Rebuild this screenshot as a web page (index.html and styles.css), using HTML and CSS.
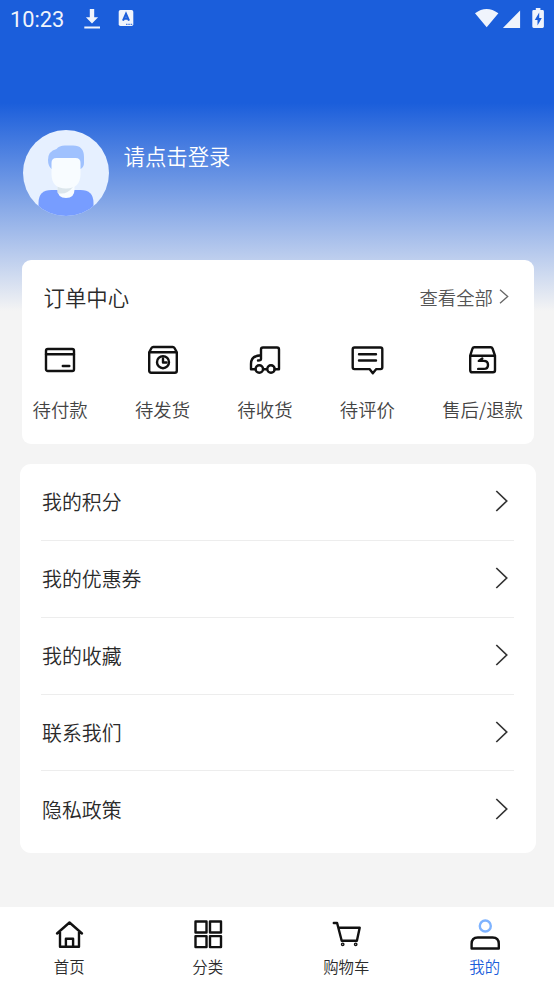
FILE: index.html
```html
<!DOCTYPE html>
<html lang="zh-CN">
<head>
<meta charset="utf-8">
<title>我的</title>
<link rel="stylesheet" href="styles.css">
</head>
<body>
<div class="screen">
  <div class="status">
    <span class="clock">10:23</span>
    <svg class="download" width="18" height="22" viewBox="0 0 18 22" fill="#f0f4fc"><path d="M6.800 1h4.400v8.300h3.900L9 15.500 2.900 9.300h3.900zM1.300 18.400h15.700v2H1.300z"/></svg>
    <svg class="app" width="16" height="18" viewBox="0 0 16 18"><rect x=".7" y="1" width="14.600" height="16" rx="1.800" fill="#f0f4fc"/><path d="M5 11.700 8 4.900 11 11.700M6 9.600h4" fill="none" stroke="#1b5edb" stroke-width="2.100"/><path d="M8 15.300h7" stroke="#1b5edb" stroke-width="1" stroke-dasharray="1.500 .8"/></svg>
    <svg class="signals" width="70" height="22" viewBox="0 0 70 22" fill="#f0f4fc"><path d="M0 5.300Q11.500-3.300 23.400 5.300L11.700 19.300zM27.900 20 45.100 2.500V20zM60.800 0h4.600v2h2.100q1.400 0 1.400 1.400v15.200q0 1.400-1.400 1.400h-8.800q-1.400 0-1.400-1.400V3.400Q57.300 2 58.700 2h2.100z"/><path d="M64.200 4.600 59.800 12h2.700v5.500L66.800 10h-2.600z" fill="#1b5edb"/></svg>
  </div>

  <div class="profile">
    <svg width="86" height="86" viewBox="0 0 86 86">
      <defs><clipPath id="disc"><circle cx="43" cy="43" r="43"/></clipPath></defs>
      <g clip-path="url(#disc)">
        <rect width="86" height="86" fill="#e6f0ff"/>
        <path d="M15.500 86V73q0-13 13-13h29q13 0 13 13v13z" fill="#779dff"/>
        <path d="M34.500 54h17v5.500q0 8.500-8.500 8.500t-8.500-8.500z" fill="#f8fcff"/>
        <path d="M34.500 56v7q9 2.500 15.500-6z" fill="#dce6ec"/>
        <path d="M28.500 39Q25 36 25 30q0-9 8.500-11Q36 15.500 42 15.500h8Q61 15.500 61 27v6q0 4-3.500 6z" fill="#9fc1fe"/>
        <path d="M28.500 33q0-5 5-5h19q5 0 5 5v11q0 14.500-14.500 14.500T28.500 44z" fill="#f8fcff"/>
      </g>
    </svg>
    <span class="login">请点击登录</span>
  </div>

  <section class="orders">
    <div class="orders-head">
      <h2>订单中心</h2>
      <a class="all">查看全部<svg width="10" height="16" viewBox="0 0 10 16"><path d="M1 .8 8.700 7.500 1 14.200" fill="none" stroke="#666" stroke-width="1.300"/></svg></a>
    </div>
    <div class="order-types">
      <div class="type">
        <svg class="line" width="36" height="36" viewBox="0 0 36 36"><rect x="4" y="7" width="28" height="22" rx="1.800"/><path d="M4 12.300h28M20.800 24h6.500"/></svg>
        <span>待付款</span>
      </div>
      <div class="type">
        <svg class="line" width="36" height="36" viewBox="0 0 36 36"><path d="M4.200 10.300 6.500 6q.6-1 1.800-1h19.400q1.200 0 1.800 1l2.300 4.300v18.400q0 2-2 2H6.200q-2 0-2-2zM4.200 10.300h27.600"/><circle cx="18" cy="20.200" r="6"/><path d="M18 16.500v4h3.500"/></svg>
        <span>待发货</span>
      </div>
      <div class="type">
        <svg class="line" width="36" height="36" viewBox="0 0 36 36"><path d="M8.500 27.200H4V22q0-8.500 10-8.700V7.500q0-2 2-2h14q2 0 2 2v19.700h-4.500M16.500 27.200h3M14 13.300V17q0 1.500-3 1.500"/><circle cx="12.300" cy="27" r="3.700"/><circle cx="24" cy="27" r="3.700"/></svg>
        <span>待收货</span>
      </div>
      <div class="type">
        <svg class="line" width="36" height="36" viewBox="0 0 36 36"><path d="M5.500 5.500h26q1.800 0 1.800 1.800v18q0 1.800-1.800 1.800h-4.200L23.800 31.300 20.500 27.100h-15q-1.800 0-1.800-1.800v-18q0-1.800 1.800-1.800zM10 12.200h17M10 18.500h17"/></svg>
        <span>待评价</span>
      </div>
      <div class="type">
        <svg class="line" width="36" height="36" viewBox="0 0 36 36"><path d="M5.200 13.700 7.500 6.500q.5-1.300 1.800-1.300h16.400q1.300 0 1.800 1.300l2.500 7.200v14.600q0 2-2 2H7.200q-2 0-2-2zM5.200 13.700h24.800M13.200 26.900h5.500q4.300 0 4.300-4t-4.300-4h-4.900l3.500-2.500"/></svg>
        <span>售后/退款</span>
      </div>
    </div>
  </section>

  <section class="menu">
    <div class="row"><span>我的积分</span><svg width="14" height="22" viewBox="0 0 14 22"><path d="M1.300 1 11.700 11 1.300 21"/></svg></div>
    <div class="row"><span>我的优惠券</span><svg width="14" height="22" viewBox="0 0 14 22"><path d="M1.300 1 11.700 11 1.300 21"/></svg></div>
    <div class="row"><span>我的收藏</span><svg width="14" height="22" viewBox="0 0 14 22"><path d="M1.300 1 11.700 11 1.300 21"/></svg></div>
    <div class="row"><span>联系我们</span><svg width="14" height="22" viewBox="0 0 14 22"><path d="M1.300 1 11.700 11 1.300 21"/></svg></div>
    <div class="row"><span>隐私政策</span><svg width="14" height="22" viewBox="0 0 14 22"><path d="M1.300 1 11.700 11 1.300 21"/></svg></div>
  </section>

  <nav class="tabs">
    <div class="tab">
      <svg class="line" width="36" height="36" viewBox="0 0 36 36"><path d="M6 17.500 18.500 6.500 31 17.500M9 16v14.700h19V16M14.900 30.700v-8h7.200v8"/></svg>
      <span>首页</span>
    </div>
    <div class="tab">
      <svg class="line" width="36" height="36" viewBox="0 0 36 36"><path d="M5.500 5.500h11v11h-11zM20 5.500h11v11H20zM5.500 20.100h11v11h-11zM20 20.100h11v11H20z"/></svg>
      <span>分类</span>
    </div>
    <div class="tab">
      <svg class="line" width="36" height="36" viewBox="0 0 36 36"><path d="M5.800 7h3.300l4.600 17.700h15.200l2.800-13H10.500"/><circle cx="14.700" cy="28.300" r=".7"/><circle cx="27.700" cy="28.300" r=".7"/></svg>
      <span>购物车</span>
    </div>
    <div class="tab active">
      <svg class="line" width="36" height="36" viewBox="0 0 36 36"><circle cx="18.300" cy="10" r="5.500" stroke="#7eb3ff"/><path d="M4.600 32.500V28q0-6.500 6.200-6.500h14.800q6.200 0 6.200 6.500v4.500z"/></svg>
      <span>我的</span>
    </div>
  </nav>
</div>
</body>
</html>
```
FILE: styles.css
```css
* { box-sizing: border-box; }
body {
  margin: 0;
  font-family: "Noto Sans CJK SC DemiLight", "Noto Sans CJK SC", sans-serif;
  font-weight: 300;
  color: #2a2a2a;
}
svg { display: block; flex: none; }
.screen {
  height: 984px;
  display: flex;
  flex-direction: column;
  background: linear-gradient(#1b5edb 0, #1b5edb 103px, #f4f4f4 311px);
}
.status {
  height: 38px;
  padding: 8px 10px 0;
  display: flex;
  align-items: flex-start;
}
.clock {
  width: 54px;
  font: 400 21.800px/23px Roboto, sans-serif;
  color: #f0f4fc;
}
.download { margin-left: 19px; }
.app { margin: 1px 0 0 17px; }
.signals { margin-left: auto; transform: translateX(1px); }
.profile {
  display: flex;
  height: 130px;
  margin: 92px 22.500px 0;
  gap: 15px;
}
.login {
  margin-top: 10px;
  font-size: 21.400px;
  line-height: 32px;
  color: #fff;
}
.orders {
  height: 184px;
  margin: 0 20px 0 22px;
  padding: 20px 11px 0;
  border-radius: 9px;
  background: #fff;
}
.orders-head {
  display: flex;
  justify-content: space-between;
  align-items: center;
  height: 34px;
  padding: 0 14px 0 10.500px;
}
h2 {
  margin: 0;
  font-size: 21.400px;
  font-weight: inherit;
  line-height: 34px;
}
.all {
  display: flex;
  align-items: center;
  gap: 6px;
  font-size: 18.400px;
  line-height: 34px;
  color: #555;
}
.order-types {
  display: flex;
  justify-content: space-between;
  margin: 28px 0 0 -0.500px;
}
.type {
  display: flex;
  flex-direction: column;
  align-items: center;
  font-size: 18.400px;
  line-height: 28px;
  color: #444;
}
.type span { margin-top: 17px; white-space: nowrap; }
.line {
  fill: none;
  stroke: #111;
  stroke-width: 2.400;
  stroke-linecap: round;
  stroke-linejoin: round;
}
.menu {
  height: 389px;
  margin: 20px 18.500px 0 20px;
  padding: 0 21.500px 0 21px;
  border-radius: 11px;
  background: #fff;
}
.row {
  display: flex;
  align-items: center;
  justify-content: space-between;
  height: 76.850px;
  padding: 0 5px 1.500px 1px;
  font-size: 19.900px;
  line-height: 30px;
  border-bottom: 1.500px solid #ededed;
}
.row:last-child { border-color: transparent; }
.row span { padding-top: 2px; }
.row path { fill: none; stroke: #333; stroke-width: 1.700; }
.tabs {
  display: flex;
  height: 77px;
  margin-top: auto;
  background: #fff;
}
.tab {
  flex: 1;
  display: flex;
  flex-direction: column;
  align-items: center;
  padding-top: 9px;
  font-size: 15.400px;
  line-height: 22px;
}
.tab span { margin-top: 3px; }
.active { color: #1b5edb; }
```
